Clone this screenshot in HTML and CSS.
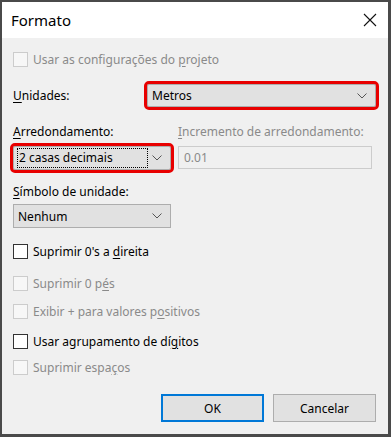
FILE: index.html
```html
<!DOCTYPE html>
<html lang="pt">
<head>
<meta charset="utf-8">
<link rel="stylesheet" href="styles.css">
</head>
<body>
<div class="window">
  <div class="titlebar">
    <span class="title">Formato</span>
    <svg class="close" width="14" height="14" viewBox="0 0 14 14"><path d="M1 1 L13 13 M13 1 L1 13" stroke="#111" stroke-width="1.1" fill="none"/></svg>
  </div>
  <div class="content">
    <label class="check disabled first"><span class="box"></span><span>Usar as configurações do <u>p</u>rojeto</span></label>

    <div class="units-row">
      <span class="lbl"><u>U</u>nidades:</span>
      <div class="select wide marked"><span>Metros</span><svg class="chev" width="10" height="6" viewBox="0 0 10 6"><path d="M0.5 0.5 L5 5 L9.5 0.5" stroke="#555" fill="none"/></svg></div>
    </div>

    <div class="round-grid">
      <span class="lbl"><u>A</u>rredondamento:</span>
      <span class="lbl disabled-text"><u>I</u>ncremento de arredondamento:</span>
      <div class="select narrow marked focus"><span class="focusbox">2 casas decimais</span><svg class="chev" width="10" height="6" viewBox="0 0 10 6"><path d="M0.5 0.5 L5 5 L9.5 0.5" stroke="#555" fill="none"/></svg></div>
      <div class="textbox">0.01</div>
    </div>

    <span class="lbl sym"><u>S</u>ímbolo de unidade:</span>
    <div class="select narrow sym-select"><span>Nenhum</span><svg class="chev" width="10" height="6" viewBox="0 0 10 6"><path d="M0.5 0.5 L5 5 L9.5 0.5" stroke="#555" fill="none"/></svg></div>

    <label class="check c1"><span class="box"></span><span>Suprimir 0's a <u>d</u>ireita</span></label>
    <label class="check disabled c2"><span class="box"></span><span>Suprimir 0 p<u>é</u>s</span></label>
    <label class="check disabled c3"><span class="box"></span><span>Exibir + para valores p<u>o</u>sitivos</span></label>
    <label class="check c4"><span class="box"></span><span>Usar agrupamento de dí<u>g</u>itos</span></label>
    <label class="check disabled c5"><span class="box"></span><span>Suprimir espa<u>ç</u>os</span></label>

    <div class="buttons">
      <div class="btn default">OK</div>
      <div class="btn">Cancelar</div>
    </div>
  </div>
</div>
</body>
</html>
```

FILE: styles.css
```css
* { box-sizing: border-box; }
html, body { margin: 0; padding: 0; }
body {
  font-family: "Noto Sans", "Liberation Sans", sans-serif;
  font-size: 12px;
  color: #000;
  background: #4a4a4a;
}
.window {
  width: 391px;
  height: 437px;
  border: 2px solid #4a4a4a;
  border-right-width: 3px;
  border-bottom-width: 3px;
  background: #f0f0f0;
  display: flex;
  flex-direction: column;
}
.titlebar {
  height: 36px;
  background: #fff;
  display: flex;
  align-items: center;
  justify-content: space-between;
  padding: 0 11px 0 9px;
}
.title { font-size: 15px; color: #000; }
.content {
  padding: 14px 8px 0 11px;
  display: flex;
  flex-direction: column;
}
u { text-decoration: underline; text-underline-offset: 2px; }
.lbl { line-height: 15px; white-space: nowrap; }
.disabled-text { color: #8a8a8a; }

.check { display: flex; align-items: center; gap: 5px; line-height: 15px; white-space: nowrap; }
.check .box {
  width: 15px; height: 15px; flex: none;
  border: 1px solid #333; background: #fff;
}
.check.disabled { color: #8a8a8a; }
.check.disabled .box { border-color: #cccccc; background: #f7f7f7; }

.select {
  position: relative;
  display: flex;
  align-items: center;
  justify-content: space-between;
  background: #e1e1e1;
  border: 1px solid #adadad;
  padding: 0 8px 0 4px;
}
.marked { outline: 3px solid #e80000; outline-offset: 0; border-radius: 2px; }

.units-row {
  margin-top: 17px;
  display: flex;
  align-items: center;
}
.units-row .lbl { width: 134px; }
.select.wide { width: 229px; height: 23px; }

.round-grid {
  margin-top: 17px;
  display: grid;
  grid-template-columns: 158px 194px;
  column-gap: 7px;
  row-gap: 6px;
}
.select.narrow { width: 158px; height: 24px; }
.select.focus { padding-left: 3px; margin-top: 1px; }
.focusbox {
  border: 1px dotted #000;
  padding: 1px;
  width: 131px;
  line-height: 16px;
}
.textbox {
  height: 23px;
  margin-top: 1px;
  border: 1px solid #cccccc;
  background: #f0f0f0;
  color: #8a8a8a;
  padding-left: 5px;
  display: flex;
  align-items: center;
}

.sym { margin-top: 14px; }
.sym-select { margin-top: 5px; }

.c1 { margin-top: 16px; }
.c2 { margin-top: 17px; }
.c3 { margin-top: 13px; }
.c4 { margin-top: 15px; }
.c5 { margin-top: 11px; }

.buttons {
  margin-top: 19px;
  display: flex;
  justify-content: flex-end;
  gap: 9px;
  padding-right: 4px;
}
.btn {
  width: 103px; height: 28px;
  background: #e1e1e1;
  border: 1px solid #adadad;
  display: flex; align-items: center; justify-content: center;
}
.btn.default { border: 2px solid #0078d7; }
```
